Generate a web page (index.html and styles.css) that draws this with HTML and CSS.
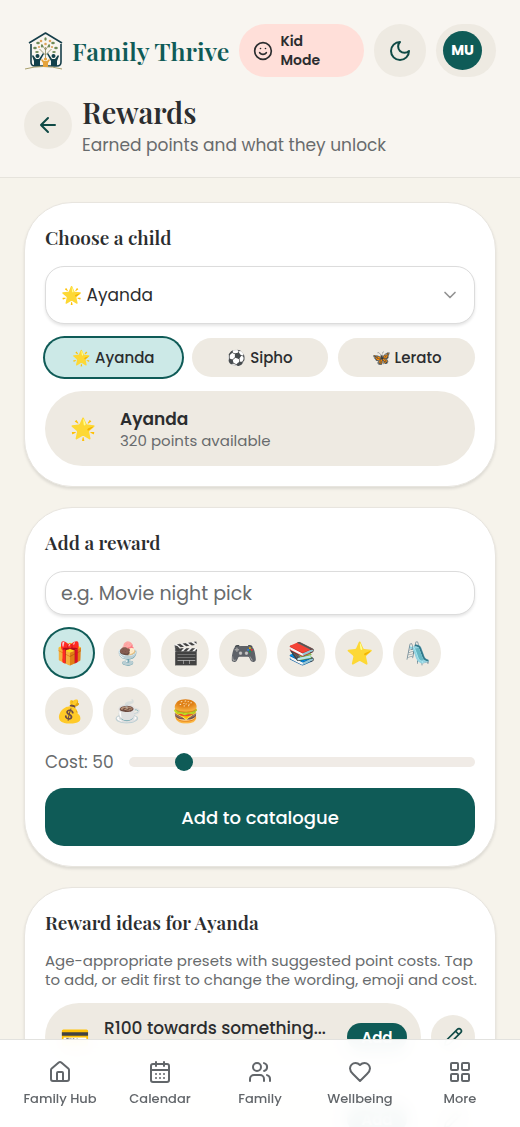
FILE: index.html
```html
<!DOCTYPE html>
<html lang="en">
<head>
    <meta charset="UTF-8">
    <meta name="viewport" content="width=device-width, initial-scale=1.0">
    <title>Rewards - Family Thrive</title>
    <link rel="stylesheet" href="styles.css">
</head>
<body>
    <header class="header">
        <div class="topbar">
            <a href="#" class="brand">
                <svg class="logo" viewBox="0 0 40 40" fill="none">
                    <path d="M7 13v18q0 4 4 4h22q4 0 4-4V13M5 12 21.500 2 38 12" stroke="#173f4a" stroke-width="1.600" stroke-linejoin="round"/>
                    <path d="M1 38q18-5 37 0" stroke="#a9a06c" stroke-width="1"/>
                    <path d="M21.500 27V16M21.500 24l-6-6M21.500 24l6-6M21.500 19l-4-6M21.500 19l4-6" stroke="#7d7b4a" stroke-width=".7"/>
                    <g fill="#6f8a57">
                        <ellipse cx="21.500" cy="8" rx="1.200" ry="1.800"/>
                        <ellipse cx="14" cy="12" rx="1.800" ry="1.200"/>
                        <ellipse cx="29" cy="12" rx="1.800" ry="1.200"/>
                        <ellipse cx="11" cy="17" rx="1.800" ry="1.200"/>
                        <ellipse cx="32" cy="17" rx="1.800" ry="1.200"/>
                        <ellipse cx="18" cy="15" rx="1.200" ry="1.600"/>
                        <ellipse cx="25" cy="15" rx="1.200" ry="1.600"/>
                        <ellipse cx="13" cy="21" rx="1.800" ry="1"/>
                        <ellipse cx="30" cy="21" rx="1.800" ry="1"/>
                    </g>
                    <g fill="#dfa45c">
                        <circle cx="17" cy="10" r="1.300"/>
                        <circle cx="26" cy="10" r="1.300"/>
                        <circle cx="21.500" cy="13" r="1.300"/>
                        <circle cx="15" cy="16" r="1.100"/>
                        <circle cx="28" cy="16" r="1.100"/>
                    </g>
                    <g fill="#12404a">
                        <circle cx="13.500" cy="25" r="2"/>
                        <circle cx="29.500" cy="25" r="2"/>
                        <path d="M9 24l3 4h3l4-6 1 1-4 7v5h-6v-5l-2-5zM34 24l-3 4h-3l-4-6-1 1 4 7v5h6v-5l2-5z"/>
                    </g>
                    <g fill="#e5a33c">
                        <circle cx="21.500" cy="28" r="1.600"/>
                        <path d="M18 28l2 2h3l2-2 1 1-2 3v4h-5v-4l-2-3z"/>
                    </g>
                </svg>
                <span class="brand-name">Family Thrive</span>
            </a>
            <button class="kid-mode">
                <svg class="icon icon-sm" viewBox="0 0 24 24"><circle cx="12" cy="12" r="10"/><path d="M8 14s1.500 2 4 2 4-2 4-2M9 9h.01M15 9h.01"/></svg>
                <span>Kid Mode</span>
            </button>
            <button class="theme-toggle" aria-label="Toggle dark mode">
                <svg class="icon" viewBox="0 0 24 24"><path d="M12 3a6 6 0 0 0 9 9 9 9 0 1 1-9-9Z"/></svg>
            </button>
            <button class="account" aria-label="Account"><span class="avatar">MU</span></button>
        </div>
        <div class="page-title">
            <button class="back" aria-label="Back">
                <svg class="icon" viewBox="0 0 24 24"><path d="m12 19-7-7 7-7M19 12H5"/></svg>
            </button>
            <div>
                <h1>Rewards</h1>
                <p>Earned points and what they unlock</p>
            </div>
        </div>
    </header>

    <main class="content">
        <section class="card">
            <h2>Choose a child</h2>
            <select class="child-select" aria-label="Child">
                <option>🌟 Ayanda</option>
                <option>⚽ Sipho</option>
                <option>🦋 Lerato</option>
            </select>
            <div class="chips">
                <button class="chip selected">🌟 Ayanda</button>
                <button class="chip">⚽ Sipho</button>
                <button class="chip">🦋 Lerato</button>
            </div>
            <div class="balance">
                <span class="balance-emoji">🌟</span>
                <div>
                    <div class="balance-name">Ayanda</div>
                    <div class="balance-points">320 points available</div>
                </div>
            </div>
        </section>

        <section class="card">
            <h2>Add a reward</h2>
            <input class="reward-input" type="text" placeholder="e.g. Movie night pick" aria-label="Reward name">
            <div class="emoji-list">
                <button class="emoji selected">🎁</button>
                <button class="emoji">🍨</button>
                <button class="emoji">🎬</button>
                <button class="emoji">🎮</button>
                <button class="emoji">📚</button>
                <button class="emoji">⭐</button>
                <button class="emoji">🛝</button>
                <button class="emoji">💰</button>
                <button class="emoji">☕</button>
                <button class="emoji">🍔</button>
            </div>
            <div class="cost">
                <label for="cost">Cost: 50</label>
                <input id="cost" type="range" min="5" max="325" step="5" value="50">
            </div>
            <button class="submit">Add to catalogue</button>
        </section>

        <section class="card">
            <h2>Reward ideas for Ayanda</h2>
            <p class="hint">Age-appropriate presets with suggested point costs. Tap to add, or edit first to change the wording, emoji and cost.</p>
            <div class="idea">
                <div class="idea-body">
                    <span class="idea-emoji">💳</span>
                    <div class="idea-name">R100 towards something...</div>
                    <button class="add">Add</button>
                </div>
                <button class="edit" aria-label="Edit">
                    <svg class="icon icon-sm" viewBox="0 0 24 24"><path d="M21.200 6.800a1 1 0 0 0-4-4L3.800 16.200a2 2 0 0 0-.5.800L2 21.400a.5.500 0 0 0 .6.600l4.400-1.300a2 2 0 0 0 .8-.5zM15 5l4 4"/></svg>
                </button>
            </div>
            <div class="idea">
                <div class="idea-body">
                    <button class="add">Add</button>
                </div>
                <button class="edit" aria-label="Edit">
                    <svg class="icon icon-sm" viewBox="0 0 24 24"><path d="M21.200 6.800a1 1 0 0 0-4-4L3.800 16.200a2 2 0 0 0-.5.800L2 21.400a.5.500 0 0 0 .6.600l4.400-1.300a2 2 0 0 0 .8-.5zM15 5l4 4"/></svg>
                </button>
            </div>
        </section>
    </main>

    <nav class="tabbar">
        <a href="#">
            <svg class="icon" viewBox="0 0 24 24"><path d="M15 21v-8a1 1 0 0 0-1-1h-4a1 1 0 0 0-1 1v8"/><path d="M3 10a2 2 0 0 1 .7-1.500l7-6a2 2 0 0 1 2.600 0l7 6A2 2 0 0 1 21 10v9a2 2 0 0 1-2 2H5a2 2 0 0 1-2-2z"/></svg>
            Family Hub
        </a>
        <a href="#">
            <svg class="icon" viewBox="0 0 24 24"><rect x="3" y="4" width="18" height="18" rx="2"/><path d="M8 2v4M16 2v4M3 10h18M8 14h.01M12 14h.01M16 14h.01M8 18h.01M12 18h.01M16 18h.01"/></svg>
            Calendar
        </a>
        <a href="#">
            <svg class="icon" viewBox="0 0 24 24"><path d="M16 21v-2a4 4 0 0 0-4-4H6a4 4 0 0 0-4 4v2M22 21v-2a4 4 0 0 0-3-3.900M16 3.100a4 4 0 0 1 0 7.800"/><circle cx="9" cy="7" r="4"/></svg>
            Family
        </a>
        <a href="#">
            <svg class="icon" viewBox="0 0 24 24"><path d="M19 14c1.500-1.500 3-3.200 3-5.500A5.500 5.500 0 0 0 16.500 3c-1.800 0-3 .5-4.500 2-1.500-1.500-2.700-2-4.500-2A5.500 5.500 0 0 0 2 8.500c0 2.300 1.500 4 3 5.500l7 7Z"/></svg>
            Wellbeing
        </a>
        <a href="#">
            <svg class="icon" viewBox="0 0 24 24"><rect x="3" y="3" width="7" height="7" rx="1"/><rect x="14" y="3" width="7" height="7" rx="1"/><rect x="14" y="14" width="7" height="7" rx="1"/><rect x="3" y="14" width="7" height="7" rx="1"/></svg>
            More
        </a>
    </nav>
</body>
</html>
```
FILE: styles.css
```css
* {
    box-sizing: border-box;
}
body {
    margin: 0;
    height: 100vh;
    display: flex;
    flex-direction: column;
    overflow: hidden;
    font-family: Poppins, Inter, sans-serif;
    color: #2b2d2f;
    background-color: #f6f3eb;
}
button, input, select {
    font-family: inherit;
    color: inherit;
}
button {
    flex: none;
    border: none;
    padding: 0;
    cursor: pointer;
    background-color: #eeeae2;
}
h1, h2, p {
    margin: 0;
}
h1, h2, .brand-name {
    font-family: "Playfair Display", "Liberation Serif", serif;
    font-weight: 600;
}
.icon {
    display: block;
    width: 24px;
    height: 24px;
    flex: none;
    margin: 0 auto;
    fill: none;
    stroke: currentColor;
    stroke-width: 2;
    stroke-linecap: round;
    stroke-linejoin: round;
}
.icon-sm {
    width: 20px;
    height: 20px;
}

/* header */
.header {
    flex: none;
    padding: 24px 24px 19px;
    background-color: #f8f5f0;
    border-bottom: 1px solid #e6e3dc;
}
.topbar {
    display: flex;
    gap: 10px;
    height: 53px;
}
.brand {
    display: flex;
    align-items: center;
    gap: 8px;
    flex: none;
    color: #0f5b57;
    text-decoration: none;
}
.logo {
    width: 40px;
    height: 40px;
}
.brand-name {
    font-size: 25px;
    white-space: nowrap;
}
.kid-mode {
    flex: 1;
    display: flex;
    align-items: center;
    gap: 7px;
    padding: 0 14px;
    border-radius: 27px;
    background-color: #ffdfd9;
    font-size: 14px;
    line-height: 19px;
    font-weight: 600;
    text-align: left;
}
.kid-mode .icon {
    margin: 0;
}
.kid-mode span {
    width: 50px;
}
.theme-toggle {
    width: 52px;
    border-radius: 27px;
    color: #0f4a46;
}
.account {
    width: 60px;
    padding-left: 7px;
    border-radius: 27px;
}
.avatar {
    display: block;
    width: 39px;
    height: 39px;
    border-radius: 50%;
    background-color: #0f5b57;
    color: #fff;
    font-size: 14px;
    line-height: 39px;
    font-weight: bold;
}
.page-title {
    display: flex;
    align-items: center;
    gap: 10px;
    margin-top: 15px;
}
.back {
    width: 48px;
    height: 48px;
    border-radius: 50%;
    color: #0f4a46;
}
.page-title h1 {
    font-size: 29px;
    line-height: 40px;
}
.page-title p {
    font-size: 17px;
    line-height: 26px;
    color: #686b6d;
}

/* cards */
.content {
    flex: 1;
    min-height: 0;
    overflow: hidden;
    display: flex;
    flex-direction: column;
    gap: 20px;
    padding: 24px;
}
.card {
    flex: none;
    display: flex;
    flex-direction: column;
    gap: 14px;
    padding: 20px;
    background-color: #fff;
    border: 1px solid #e8e5df;
    border-radius: 48px;
    box-shadow: 0 2px 3px rgba(0,0,0,0.1);
}
.card h2 {
    font-size: 19px;
    line-height: 29px;
}
.child-select, .reward-input {
    width: 100%;
    border: 1px solid #dcdcdc;
    border-radius: 19px;
    padding: 0 15px;
    background-color: #fff;
    box-shadow: 0 2px 3px rgba(0,0,0,0.1);
}
.child-select {
    appearance: none;
    height: 58px;
    font-size: 17px;
    background-image: url("data:image/svg+xml,%3Csvg xmlns='http://www.w3.org/2000/svg' width='20' height='20' viewBox='0 0 24 24' fill='none' stroke='%23929292' stroke-width='2' stroke-linecap='round' stroke-linejoin='round'%3E%3Cpath d='m6 9 6 6 6-6'/%3E%3C/svg%3E");
    background-repeat: no-repeat;
    background-position: right 14px center;
}
.chips {
    display: grid;
    grid-template-columns: repeat(3, 1fr);
    gap: 10px;
}
.chip {
    height: 39px;
    border-radius: 20px;
    font-size: 15px;
    font-weight: 500;
}
.selected {
    background-color: #cce9e7;
    box-shadow: 0 0 0 2px #0f5b57;
}
.balance {
    display: flex;
    align-items: center;
    gap: 14px;
    height: 75px;
    padding: 0 14px;
    border-radius: 38px;
    background-color: #eeeae2;
}
.balance-emoji {
    width: 47px;
    font-size: 21px;
    text-align: center;
}
.balance-name {
    font-size: 17px;
    line-height: 24px;
    font-weight: 600;
}
.balance-points {
    font-size: 15px;
    line-height: 19px;
    color: #686b6d;
}
.reward-input {
    height: 44px;
    font-size: 19px;
}
.reward-input::placeholder {
    color: #686b6d;
}
.emoji-list {
    display: flex;
    flex-wrap: wrap;
    gap: 10px;
}
.emoji {
    width: 48px;
    height: 48px;
    border-radius: 50%;
    font-size: 22px;
}
.cost {
    display: flex;
    align-items: center;
    gap: 15px;
    height: 25px;
    font-size: 17px;
    color: #686b6d;
}
.cost input {
    appearance: none;
    flex: 1;
    min-width: 0;
    height: 10px;
    margin: 0;
    border-radius: 5px;
    background-color: #f0ebe6;
}
.cost input::-webkit-slider-thumb {
    appearance: none;
    width: 18px;
    height: 18px;
    border-radius: 50%;
    background-color: #0f5b57;
}
.submit {
    height: 58px;
    border-radius: 19px;
    background-color: #0f5b57;
    color: #fff;
    font-size: 18px;
    font-weight: 500;
}
.hint {
    margin-right: -10px;
    font-size: 15px;
    line-height: 19px;
    color: #686b6d;
}
.idea {
    display: flex;
    align-items: center;
    gap: 10px;
}
.idea-body {
    flex: 1;
    min-width: 0;
    display: flex;
    align-items: center;
    justify-content: flex-end;
    gap: 14px;
    height: 68px;
    padding: 0 14px;
    border-radius: 34px;
    background-color: #eeeae2;
}
.idea-emoji {
    width: 31px;
    font-size: 24px;
    text-align: center;
}
.idea-name {
    flex: 1;
    min-width: 0;
    padding-bottom: 19px;
    white-space: nowrap;
    font-size: 17px;
    line-height: 24px;
    font-weight: 500;
}
.add {
    width: 60px;
    height: 28px;
    border-radius: 14px;
    background-color: #0f5b57;
    color: #fff;
    font-size: 15px;
    font-weight: 600;
}
.edit {
    width: 44px;
    height: 44px;
    border-radius: 50%;
    color: #0f4a46;
}

/* bottom navigation */
.tabbar {
    position: fixed;
    left: 0;
    right: 0;
    bottom: 0;
    display: grid;
    grid-template-columns: repeat(5, 1fr);
    height: 88px;
    padding: 0 10px;
    background-color: rgba(255,255,255,0.96);
    border-top: 1px solid #e2e2df;
    backdrop-filter: blur(8px);
}
.tabbar a {
    display: flex;
    flex-direction: column;
    align-items: center;
    padding-top: 20px;
    gap: 6px;
    color: #62666a;
    font-size: 13px;
    line-height: 18px;
    font-weight: 500;
    text-decoration: none;
    white-space: nowrap;
}
.tabbar .icon {
    margin: 0;
}
```
